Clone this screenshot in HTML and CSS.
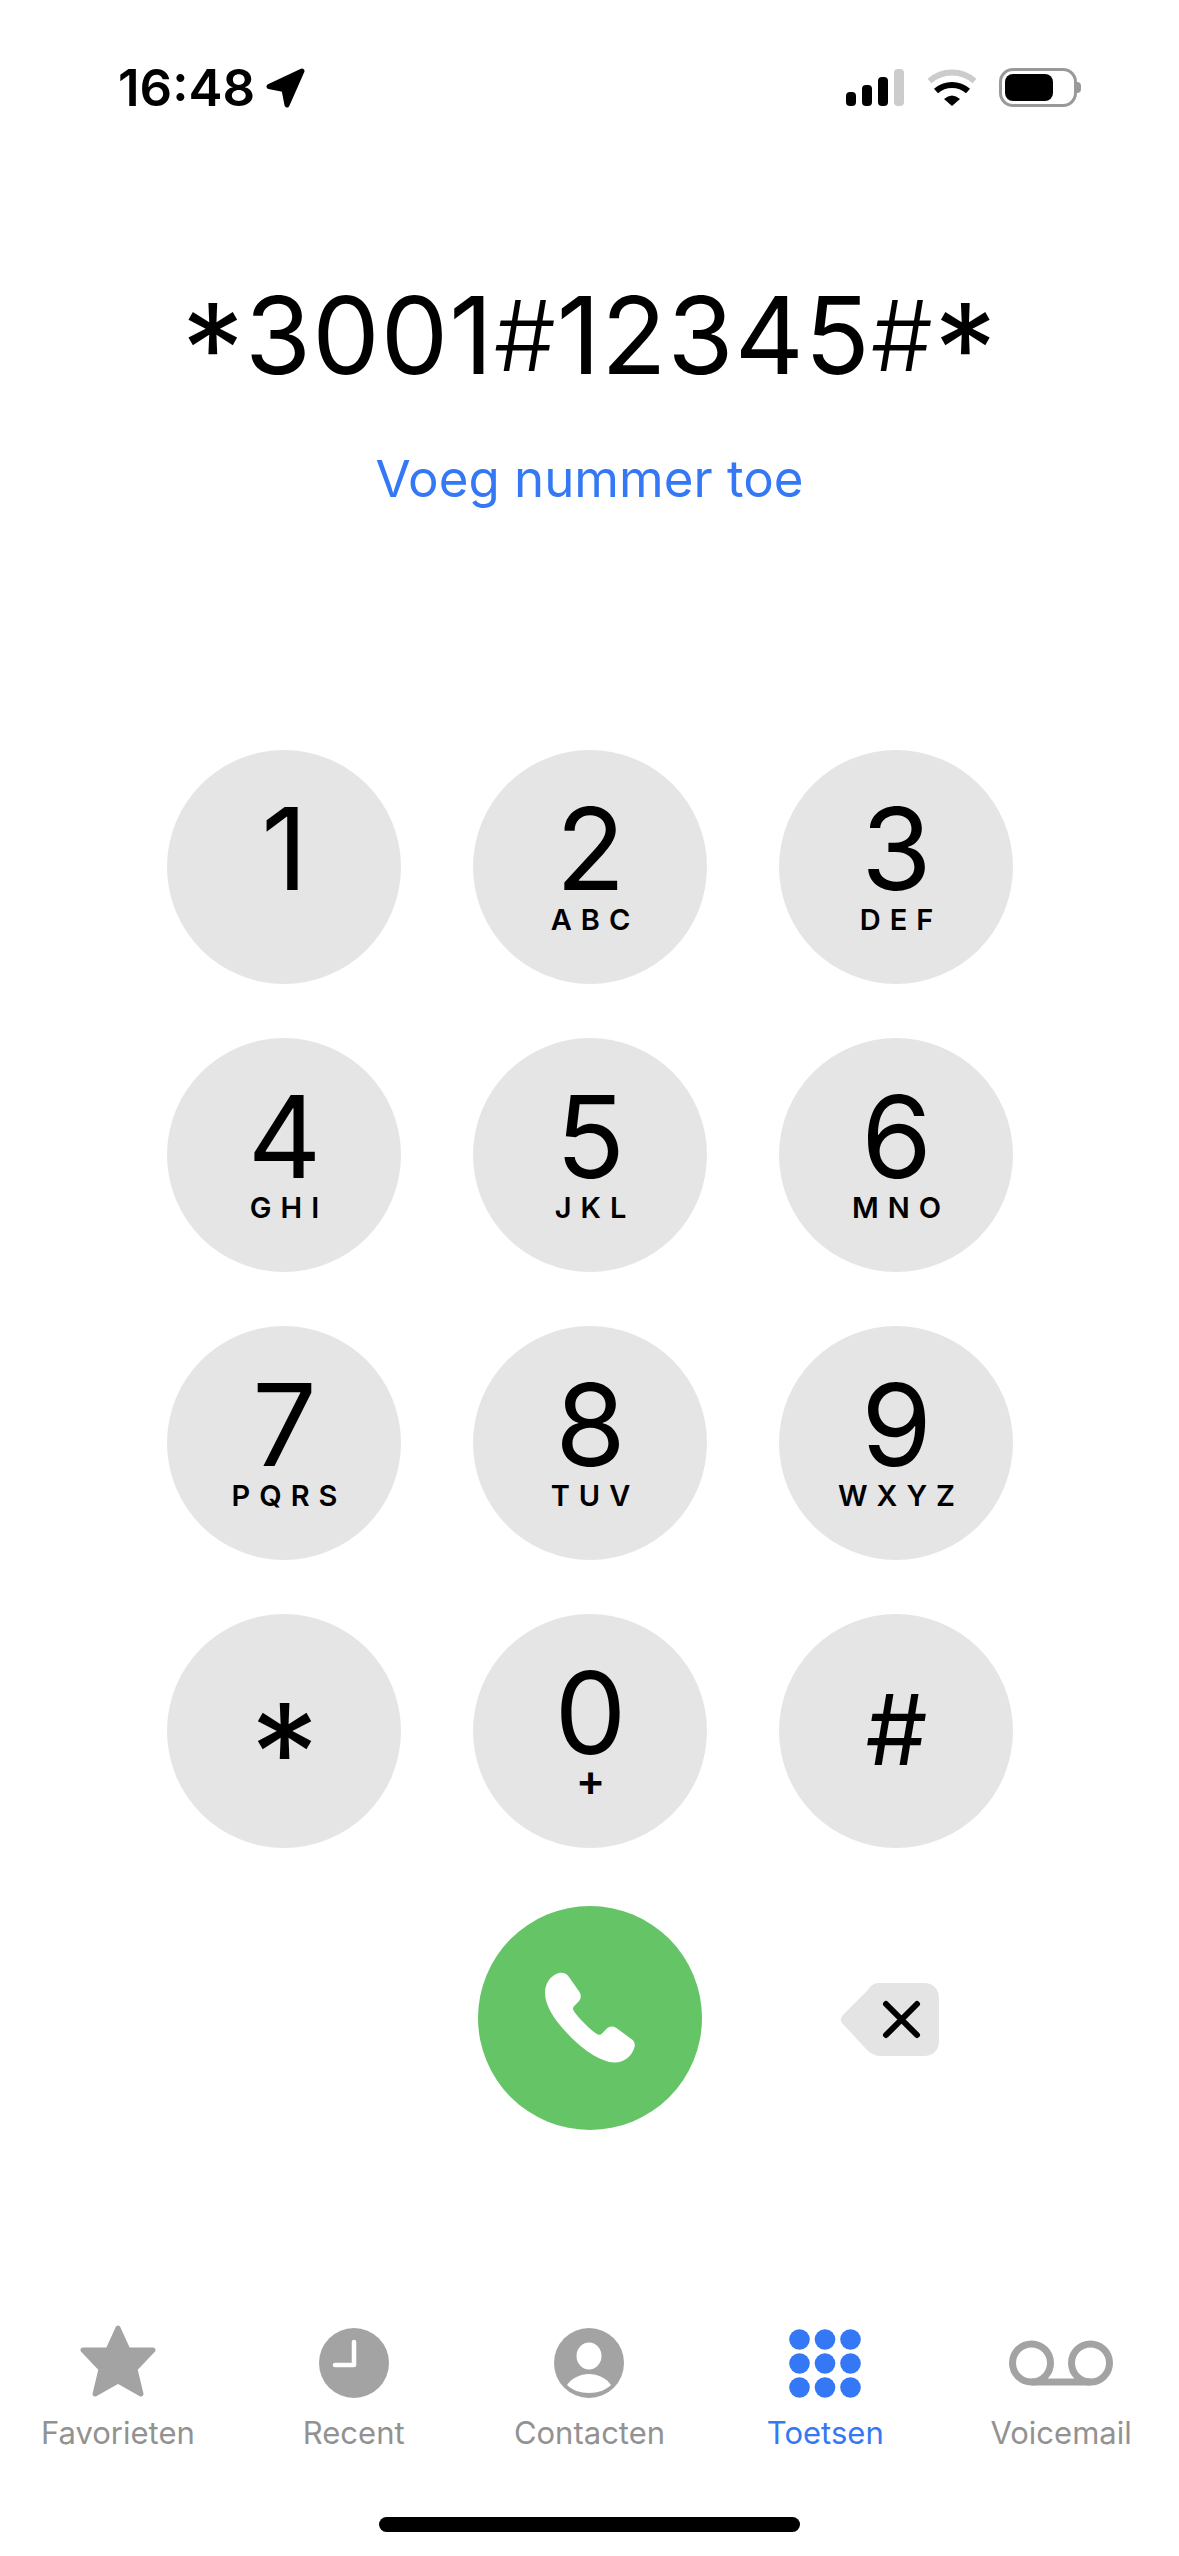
FILE: index.html
```html
<!DOCTYPE html>
<html lang="nl">
<head>
    <meta charset="UTF-8">
    <meta name="viewport" content="width=device-width, initial-scale=1.0">
    <title>Toetsen</title>
    <link rel="stylesheet" href="styles.css">
</head>
<body>

<header class="status-bar">
    <div class="status-left">
        <span class="time">16:48</span>
        <svg class="location" viewBox="0 0 39 40"><path d="M3 18.5 36 3 21 37 18 21.5Z" fill="#000" stroke="#000" stroke-width="5" stroke-linejoin="round"/></svg>
    </div>
    <div class="status-right">
        <div class="signal">
            <span class="bar bar-1"></span>
            <span class="bar bar-2"></span>
            <span class="bar bar-3"></span>
            <span class="bar bar-4"></span>
        </div>
        <svg class="wifi" viewBox="0 0 50 37" fill="none">
            <path d="M2.5 12A34 34 0 0 1 47.5 12" stroke="#ccc" stroke-width="6"/>
            <path d="M9 22A24 24 0 0 1 41 22" stroke="#000" stroke-width="6"/>
            <path d="M17 30Q25 23 33 30L25 37Z" fill="#000"/>
        </svg>
        <div class="battery"><span class="battery-fill"></span></div>
        <span class="battery-cap"></span>
    </div>
</header>

<section class="dial">
    <div class="number"><span class="ast">*</span>3001<span class="hash">#</span>12345<span class="hash">#</span><span class="ast">*</span></div>
    <a class="add-number">Voeg nummer toe</a>
</section>

<main class="keypad">
    <div class="key"><span class="digit">1</span></div>
    <div class="key"><span class="digit">2</span><span class="letters">ABC</span></div>
    <div class="key"><span class="digit">3</span><span class="letters">DEF</span></div>
    <div class="key"><span class="digit">4</span><span class="letters">GHI</span></div>
    <div class="key"><span class="digit">5</span><span class="letters">JKL</span></div>
    <div class="key"><span class="digit">6</span><span class="letters">MNO</span></div>
    <div class="key"><span class="digit">7</span><span class="letters">PQRS</span></div>
    <div class="key"><span class="digit">8</span><span class="letters">TUV</span></div>
    <div class="key"><span class="digit">9</span><span class="letters">WXYZ</span></div>
    <div class="key key-star"><span class="digit symbol-star">*</span></div>
    <div class="key"><span class="digit">0</span><span class="letters plus">+</span></div>
    <div class="key key-hash"><span class="digit symbol-hash">#</span></div>
    <div></div>
    <div class="call">
        <svg class="call-icon" viewBox="255 278 270 272"><path d="M300 280C312 278 322 284 328 294L358 337C364 347 364 358 356 366L342 380C338 385 338 390 342 395C355 415 392 452 412 464C418 467 422 466 426 462L440 448C449 439 460 439 470 446L516 480C524 486 527 496 522 508C512 534 490 550 462 549C425 547 375 516 330 470C285 425 255 380 255 340C255 312 272 286 300 280Z" fill="#fff"/></svg>
    </div>
    <div class="backspace">
        <svg class="backspace-icon" viewBox="0 0 100 73">
            <path d="M34 0H84C93 0 99 6 99 15V58C99 67 93 73 84 73H42C36 73 31 71 27 67L3 41C0 38 0 35 3 32L27 8C30 3 34 0 38 0Z" fill="#e4e4e4"/>
            <path d="M46 21 77 52M77 21 46 52" stroke="#000" stroke-width="6" stroke-linecap="round"/>
        </svg>
    </div>
</main>

<nav class="tabs">
    <div class="tab">
        <svg class="tab-icon icon-star" viewBox="0 0 76 74"><path d="M38 4 48 26H73L55 45 61 70 38 57 15 70 21 45 3 26H28Z" fill="#a3a3a3" stroke="#a3a3a3" stroke-width="5" stroke-linejoin="round"/></svg>
        <span class="tab-label">Favorieten</span>
    </div>
    <div class="tab">
        <svg class="tab-icon icon-round" viewBox="0 -4 70 74"><circle cx="35" cy="35" r="35" fill="#a3a3a3"/><path d="M35 14V37H16" fill="none" stroke="#fff" stroke-width="4.5" stroke-linecap="round" stroke-linejoin="round"/></svg>
        <span class="tab-label">Recent</span>
    </div>
    <div class="tab">
        <svg class="tab-icon icon-round" viewBox="0 -4 70 74"><circle cx="35" cy="35" r="35" fill="#a3a3a3"/><ellipse cx="35" cy="28" rx="12.5" ry="13.5" fill="#fff"/><path d="M13 57C18 50 26 46 35 46C44 46 52 50 57 57C52 62 44 65 35 65C26 65 18 62 13 57Z" fill="#fff"/></svg>
        <span class="tab-label">Contacten</span>
    </div>
    <div class="tab tab-active">
        <svg class="tab-icon icon-keys" viewBox="0 -5 72 74" fill="#3478f6">
            <circle cx="10.5" cy="10.5" r="10.3"/><circle cx="36" cy="10.5" r="10.3"/><circle cx="61.5" cy="10.5" r="10.3"/>
            <circle cx="10.5" cy="34.5" r="10.3"/><circle cx="36" cy="34.5" r="10.3"/><circle cx="61.5" cy="34.5" r="10.3"/>
            <circle cx="10.5" cy="58.5" r="10.3"/><circle cx="36" cy="58.5" r="10.3"/><circle cx="61.5" cy="58.5" r="10.3"/>
        </svg>
        <span class="tab-label">Toetsen</span>
    </div>
    <div class="tab">
        <svg class="tab-icon icon-mail" viewBox="0 -4 104 74" fill="none" stroke="#a3a3a3" stroke-width="7"><circle cx="22.5" cy="35" r="19"/><circle cx="81.5" cy="35" r="19"/><path d="M22.5 54H81.5"/></svg>
        <span class="tab-label">Voicemail</span>
    </div>
</nav>

<div class="home-indicator"></div>

</body>
</html>
```

FILE: styles.css
```css
body {
    font-family: Inter, "Liberation Sans", sans-serif;
    margin: 0;
    padding: 0;
    background-color: #fff;
    color: #000;
    width: 1179px;
    height: 2556px;
    overflow: hidden;
}

/* status bar */
.status-bar {
    height: 140px;
    display: flex;
    justify-content: space-between;
    padding: 68px 98px 0 118px;
    box-sizing: border-box;
}
.status-left {
    display: flex;
    align-items: flex-start;
    gap: 11px;
}
.time {
    font-size: 51px;
    font-weight: 600;
    line-height: 40px;
}
.location {
    width: 39px;
    height: 40px;
}
.status-right {
    display: flex;
    align-items: flex-start;
}
.signal {
    display: flex;
    align-items: flex-end;
    gap: 6px;
    height: 38px;
    margin-right: 23px;
}
.bar {
    width: 10px;
    background-color: #000;
    border-radius: 4px;
}
.bar-1 { height: 14px; }
.bar-2 { height: 21px; }
.bar-3 { height: 29px; }
.bar-4 { height: 37px; background-color: #ccc; }
.wifi {
    width: 50px;
    height: 37px;
    margin-top: 1px;
    margin-right: 22px;
}
.battery {
    width: 78px;
    height: 39px;
    box-sizing: border-box;
    border: 3px solid #999;
    border-radius: 14px;
    padding: 3px;
}
.battery-fill {
    display: block;
    width: 48px;
    height: 27px;
    background-color: #000;
    border-radius: 8px;
}
.battery-cap {
    width: 4px;
    height: 11px;
    margin-top: 14px;
    background-color: #999;
    border-radius: 0 4px 4px 0;
}

/* number */
.dial {
    height: 610px;
    padding-top: 140px;
    box-sizing: border-box;
    text-align: center;
}
.number {
    font-size: 107px;
    line-height: 110px;
    letter-spacing: 1px;
    white-space: nowrap;
}
.ast {
    font-size: 125px;
    line-height: 0;
    vertical-align: -0.16em;
}
.hash {
    font-size: 98px;
    font-weight: 300;
    line-height: 0;
    vertical-align: 3px;
}
.add-number {
    display: block;
    margin-top: 57px;
    font-size: 51px;
    line-height: 64px;
    color: #3478f6;
}

/* keypad */
.keypad {
    display: grid;
    grid-template-columns: repeat(3, 234px);
    grid-auto-rows: 234px;
    column-gap: 72px;
    row-gap: 54px;
    justify-content: center;
}
.key {
    background-color: #e5e5e5;
    border-radius: 50%;
    display: flex;
    flex-direction: column;
    align-items: center;
    padding-top: 44px;
    padding-left: 2px;
    box-sizing: border-box;
}
.digit {
    font-size: 114px;
    line-height: 110px;
}
.letters {
    font-size: 29px;
    font-weight: 600;
    line-height: 34px;
    letter-spacing: 9px;
    margin-right: -9px;
    margin-top: -1px;
}
.plus {
    font-size: 44px;
    letter-spacing: 0;
    margin-right: 0;
    margin-top: -5px;
}
.key-star {
    padding-top: 54px;
}
.key-hash {
    padding-top: 61px;
}
.symbol-star {
    font-size: 137px;
    line-height: 170px;
}
.symbol-hash {
    font-size: 98px;
}
.call {
    width: 224px;
    height: 224px;
    place-self: center;
    margin-bottom: 3px;
    background-color: #65c466;
    border-radius: 50%;
    display: flex;
    align-items: center;
    justify-content: center;
}
.call-icon {
    width: 90px;
    height: 91px;
}
.backspace {
    display: flex;
    align-items: center;
    justify-content: center;
    padding-right: 11px;
}
.backspace-icon {
    width: 100px;
    height: 73px;
}

/* tab bar */
.tabs {
    display: grid;
    grid-template-columns: repeat(5, 1fr);
    margin-top: 188px;
}
.tab {
    display: flex;
    flex-direction: column;
    align-items: center;
    color: #929292;
}
.tab-icon {
    height: 74px;
}
.icon-star { width: 76px; }
.icon-round { width: 70px; }
.icon-keys { width: 72px; }
.icon-mail { width: 104px; }
.tab-label {
    font-size: 31px;
    line-height: 36px;
    margin-top: 17px;
}
.tab-active {
    color: #3478f6;
}
.home-indicator {
    width: 421px;
    height: 15px;
    margin: 66px auto 0;
    background-color: #000;
    border-radius: 8px;
}
```
